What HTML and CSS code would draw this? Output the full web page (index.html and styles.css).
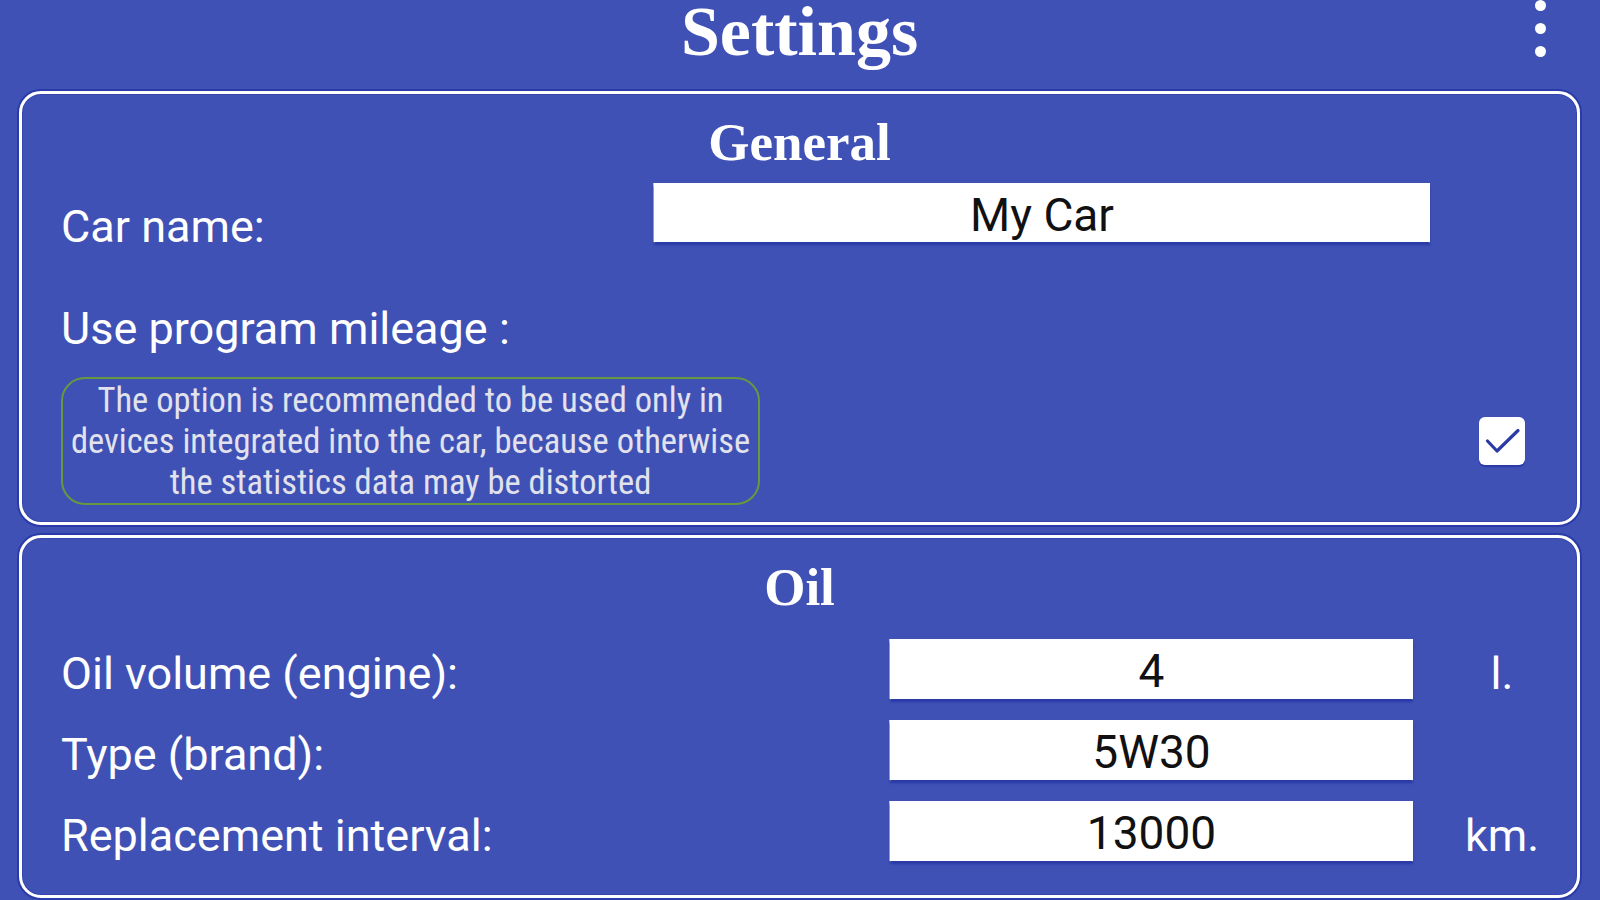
FILE: index.html
```html
<!DOCTYPE html>
<html lang="en">
<head>
<meta charset="utf-8">
<title>Settings</title>
<link rel="stylesheet" href="styles.css">
</head>
<body>
<div class="page">
  <header class="topbar">
    <div class="topbar-side"></div>
    <h1 class="title">Settings</h1>
    <div class="topbar-side topbar-right">
      <div class="menu" aria-label="More options">
        <span class="dot"></span><span class="dot"></span><span class="dot"></span>
      </div>
    </div>
  </header>

  <section class="card card-general">
    <h2 class="card-title">General</h2>
    <div class="row row-name">
      <div class="label label-name">Car name:</div>
      <div class="field field-name">My Car</div>
    </div>
    <div class="row row-mileage">
      <div class="label">Use program mileage :</div>
    </div>
    <div class="row row-note">
      <div class="note">
        <span class="note-line">The option is recommended to be used only in</span>
        <span class="note-line">devices integrated into the car, because otherwise</span>
        <span class="note-line">the statistics data may be distorted</span>
      </div>
      <div class="side-col">
        <div class="checkbox">
          <svg width="46" height="48" viewBox="0 0 46 48"><path d="M8.5 24 L18 34 L39 13.5" fill="none" stroke="#2b3aa6" stroke-width="3.2" stroke-linecap="round" stroke-linejoin="round"/></svg>
        </div>
      </div>
    </div>
  </section>

  <section class="card card-oil">
    <h2 class="card-title card-title-oil">Oil</h2>
    <div class="oil-grid">
      <div class="label oil-label">Oil volume (engine):</div>
      <div class="field">4</div>
      <div class="unit">l.</div>

      <div class="label oil-label">Type (brand):</div>
      <div class="field">5W30</div>
      <div class="unit"></div>

      <div class="label oil-label">Replacement interval:</div>
      <div class="field">13000</div>
      <div class="unit">km.</div>
    </div>
  </section>
</div>
</body>
</html>
```

FILE: styles.css
```css
html, body {
  margin: 0;
  padding: 0;
}

body {
  background: #3f51b5;
  color: #ffffff;
  font-family: Roboto, "Liberation Sans", sans-serif;
  width: 1600px;
  height: 900px;
  overflow: hidden;
}

.page {
  padding: 0 20px 0 19px;
  display: flex;
  flex-direction: column;
}

/* ---------- top bar ---------- */
.topbar {
  height: 91px;
  display: grid;
  grid-template-columns: 1fr auto 1fr;
  align-items: start;
}

.title {
  margin: 0;
  padding-top: 1px;
  font-family: "Liberation Serif", "Times New Roman", serif;
  font-weight: bold;
  font-size: 70px;
  line-height: 61px;
  color: #ffffff;
  text-align: center;
}

.topbar-right {
  display: flex;
  justify-content: flex-end;
  padding-right: 34px;
}

.menu {
  display: flex;
  flex-direction: column;
  gap: 12px;
}

.dot {
  width: 11px;
  height: 11px;
  border-radius: 50%;
  background: #ffffff;
}

/* ---------- cards ---------- */
.card {
  border: 3px solid #ffffff;
  border-radius: 22px;
  box-shadow: 0 0 0 2px #2a3aa6, inset 0 0 0 1px #3446ad;
  padding: 20px 13px 17px 39px;
}

.card-oil {
  margin-top: 10px;
  padding-top: 21px;
  padding-bottom: 34px;
}

.card-title {
  margin: 0 -13px 0 -39px;
  font-family: "Liberation Serif", "Times New Roman", serif;
  font-weight: bold;
  font-size: 53px;
  line-height: 57px;
  text-align: center;
  color: #ffffff;
}

.label {
  font-size: 45px;
  line-height: 50px;
  color: #ffffff;
  white-space: nowrap;
}

.field {
  background: #ffffff;
  color: #111111;
  font-size: 46px;
  height: 59px;
  box-sizing: border-box;
  padding-top: 4px;
  display: flex;
  align-items: center;
  justify-content: center;
  box-shadow: 0 3px 2px #2a3aa6, -1px 0 0 #c9c9c9, 0 1px 0 #bdbdbd;
}

/* General */
.row {
  display: flex;
  align-items: flex-start;
}

.row-name {
  margin-top: 12px;
}

.label-name {
  flex: 0 0 593px;
  margin-top: 19px;
}

.field-name {
  width: 776px;
}

.row-mileage {
  margin-top: 52px;
}

.row-note {
  margin-top: 23px;
  align-items: center;
  justify-content: space-between;
}

.note {
  width: 695px;
  height: 124px;
  border: 2px solid #66993f;
  border-radius: 24px;
  display: flex;
  flex-direction: column;
  align-items: center;
  justify-content: center;
  color: #e2e2ec;
  font-family: "Liberation Sans Narrow", "Roboto Condensed", "DejaVu Sans Condensed", Roboto, sans-serif;
  font-stretch: condensed;
  font-size: 34.5px;
  line-height: 41px;
}

.note-line {
  white-space: nowrap;
}

.side-col {
  width: 124px;
  display: flex;
  justify-content: center;
}

.checkbox {
  width: 46px;
  height: 48px;
  background: #ffffff;
  border-radius: 6px;
  box-shadow: 0 2px 1px #2a3aa6;
  display: flex;
}

/* Oil */
.oil-grid {
  margin-top: 23px;
  display: grid;
  grid-template-columns: 1fr 523px 124px;
  grid-auto-rows: 60px;
  column-gap: 27px;
  row-gap: 21px;
}

.oil-grid .field {
  height: 60px;
  padding-top: 3px;
}

.oil-label {
  margin-top: 10px;
  margin-right: -27px;
}

.unit {
  font-size: 45px;
  line-height: 50px;
  margin-top: 10px;
  text-align: center;
  color: #ffffff;
}
```
